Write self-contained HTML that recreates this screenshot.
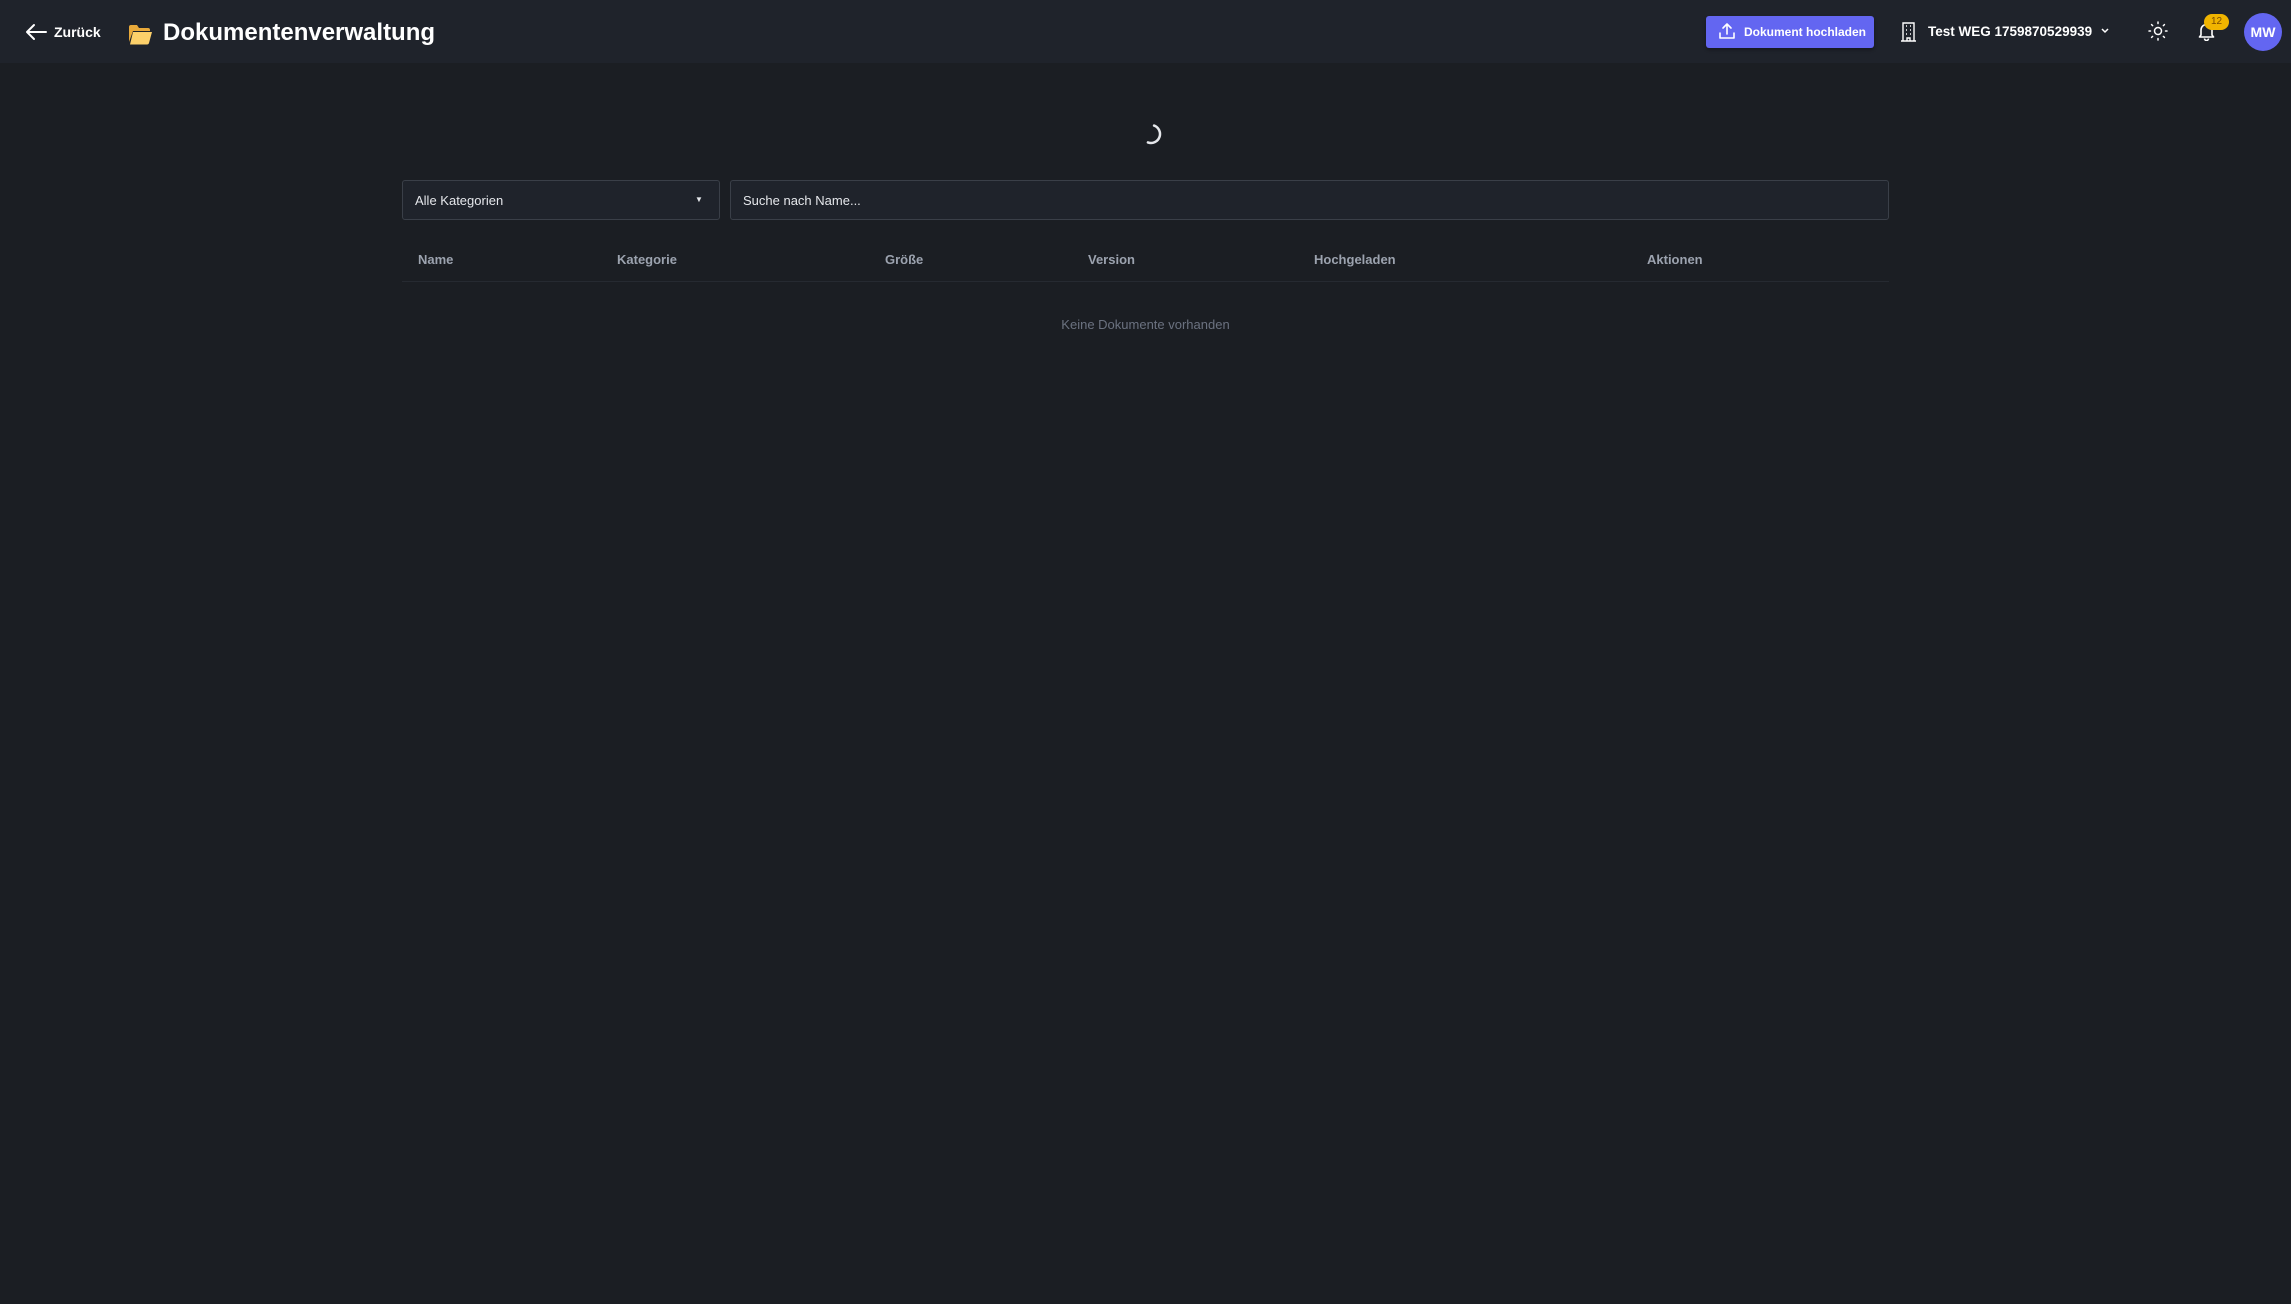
<!DOCTYPE html>
<html><head><meta charset="utf-8"><style>
*{box-sizing:border-box;margin:0;padding:0}
body{width:2291px;height:1304px;background:#1b1e23;font-family:"Liberation Sans",sans-serif;color:#fff;position:relative;overflow:hidden}
.hdr{position:absolute;left:0;top:0;width:2291px;height:63px;background:#1f232b}
.a{position:absolute}
.btn{left:1706px;top:16px;width:168px;height:32px;background:#6366f1;border-radius:3px;box-shadow:0 2px 3px rgba(0,0,0,.3)}
.inp{background:#1f232b;border:1px solid #3a3f48;border-radius:3px;height:40px;font-size:13px;color:#e5e7eb;padding:12px 12px}
.th{top:252px;font-size:13px;font-weight:bold;color:#9ca3af}
</style></head><body>
<div class="hdr"></div>
<svg class="a" style="left:24px;top:22px" width="24" height="20" viewBox="0 0 24 20"><path d="M22 10H3M10 3L3 10l7 7" fill="none" stroke="#fff" stroke-width="2" stroke-linecap="round" stroke-linejoin="round"/></svg>
<div class="a" style="left:54px;top:24px;font-size:14px;font-weight:bold">Zurück</div>
<svg class="a" style="left:128px;top:24px" width="25" height="21" viewBox="0 0 25 21"><path d="M1 3q0-2 2-2h6l2 3h9q2 0 2 2v1H5L1 18z" fill="#e8a93a"/><path d="M5 8h19l-3 11q-.4 1.5-2 1.5H2z" fill="#fcd06a"/></svg>
<div class="a" style="left:163px;top:19px;font-size:24px;font-weight:bold">Dokumentenverwaltung</div>
<div class="a btn"></div>
<svg class="a" style="left:1718px;top:22px" width="18" height="18" viewBox="0 0 18 18"><path d="M9 12V2M5 6l4-4 4 4M2 11v5h14v-5" fill="none" stroke="#fff" stroke-width="1.6" stroke-linecap="round" stroke-linejoin="round"/></svg>
<div class="a" style="left:1744px;top:25px;font-size:12px;font-weight:bold">Dokument hochladen</div>
<svg class="a" style="left:1900px;top:21px" width="17" height="21" viewBox="0 0 17 21"><path d="M3 20V2h11v18M1 20h15M6 5h1M10 5h1M6 9h1M10 9h1M6 13h1M10 13h1M7 20v-3h3v3" fill="none" stroke="#fff" stroke-width="1.4"/></svg>
<div class="a" style="left:1928px;top:24px;font-size:13.5px;font-weight:bold">Test WEG 1759870529939</div>
<svg class="a" style="left:2100px;top:27px" width="10" height="8" viewBox="0 0 10 8"><path d="M2 2l3 3 3-3" fill="none" stroke="#fff" stroke-width="1.5"/></svg>
<svg class="a" style="left:2148px;top:21px" width="20" height="20" viewBox="0 0 20 20"><circle cx="10" cy="10" r="3.5" fill="none" stroke="#fff" stroke-width="1.5"/><g stroke="#fff" stroke-width="1.5" stroke-linecap="round"><path d="M10 1v1.5M10 17.5V19M1 10h1.5M17.5 10H19M3.6 3.6l1 1M15.4 15.4l1 1M3.6 16.4l1-1M15.4 4.6l1-1"/></g></svg>
<svg class="a" style="left:2198px;top:21px" width="17" height="20" viewBox="0 0 17 20"><path d="M3 14V9a5.5 5.5 0 0 1 11 0v5l1.5 2h-14zM6.5 17.5a2 2 0 0 0 4 0" fill="none" stroke="#fff" stroke-width="1.6" stroke-linejoin="round"/></svg>
<div class="a" style="left:2204px;top:14px;width:25px;height:16px;border-radius:8px;background:#f0b400;color:#7a4a00;font-size:10px;text-align:center;line-height:16px">12</div>
<div class="a" style="left:2244px;top:13px;width:38px;height:38px;border-radius:50%;background:#6366f1;font-size:14px;font-weight:bold;text-align:center;line-height:38px">MW</div>
<svg class="a" style="left:1139px;top:122px" width="24" height="24" viewBox="0 0 24 24"><path d="M12 3a9 9 0 0 1 0 18" fill="none" stroke="#e5e7eb" stroke-width="2.5" stroke-linecap="round" transform="rotate(20 12 12)"/></svg>
<div class="a inp" style="left:402px;top:180px;width:318px">Alle Kategorien</div>
<div class="a" style="left:695px;top:195px;font-size:8px;color:#e5e7eb">▼</div>
<div class="a inp" style="left:730px;top:180px;width:1159px">Suche nach Name...</div>
<div class="a th" style="left:418px">Name</div>
<div class="a th" style="left:617px">Kategorie</div>
<div class="a th" style="left:885px">Größe</div>
<div class="a th" style="left:1088px">Version</div>
<div class="a th" style="left:1314px">Hochgeladen</div>
<div class="a th" style="left:1647px">Aktionen</div>
<div class="a" style="left:402px;top:281px;width:1487px;height:1px;background:#262a31"></div>
<div class="a" style="left:0;top:317px;width:2291px;text-align:center;font-size:13px;color:#6b7280">Keine Dokumente vorhanden</div>
</body></html>
